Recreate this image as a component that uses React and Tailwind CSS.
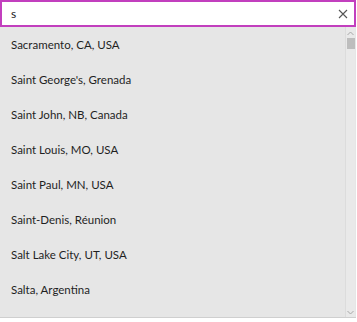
import React from "react";

const places = [
  "Sacramento, CA, USA",
  "Saint George's, Grenada",
  "Saint John, NB, Canada",
  "Saint Louis, MO, USA",
  "Saint Paul, MN, USA",
  "Saint-Denis, Réunion",
  "Salt Lake City, UT, USA",
  "Salta, Argentina",
  "Salvador, Brazil",
];

const App = () => {
  return (
    <div className="w-[357px] h-[322px] bg-white overflow-hidden" style={{ fontFamily: 'Lato, "Noto Sans", sans-serif' }}>
      {/* search box */}
      <div className="h-[27px] w-[356px] border-2 border-[#c23fbe] bg-white flex items-center pl-[9px] pr-[6px]">
        <span className="flex-1 text-[12px] text-[#1a1a1a] leading-none">s</span>
        <svg width="10" height="10" viewBox="0 0 10 10">
          <path d="M1 1L9 9M9 1L1 9" stroke="#555" strokeWidth="1.1" />
        </svg>
      </div>

      {/* results */}
      <div className="w-[356px] h-[291px] bg-[#e6e6e6] border-b border-[#cfcfcf] flex">
        <ul className="flex-1 overflow-hidden">
          {places.map((p, i) => (
            <li key={i} className="h-[35px] shrink-0 flex items-center pl-[11px] text-[11.5px] text-[#1f1f1f]">
              {p}
            </li>
          ))}
        </ul>
        <div className="w-[10px] flex flex-col items-center bg-[#e9e9e9] border-l border-[#dcdcdc] mr-[1px]">
          <svg width="7" height="5" viewBox="0 0 7 5" className="mt-[4px]">
            <path d="M0.5 4L3.5 1L6.5 4" stroke="#a8a8a8" fill="none" strokeWidth="1" />
          </svg>
          <div className="w-[8px] h-[11px] bg-[#bdbdbd] mt-[2px]" />
          <div className="flex-1" />
          <svg width="7" height="5" viewBox="0 0 7 5" className="mb-[2px]">
            <path d="M0.5 1L3.5 4L6.5 1" stroke="#a8a8a8" fill="none" strokeWidth="1" />
          </svg>
        </div>
      </div>
    </div>
  );
};

export default App;
